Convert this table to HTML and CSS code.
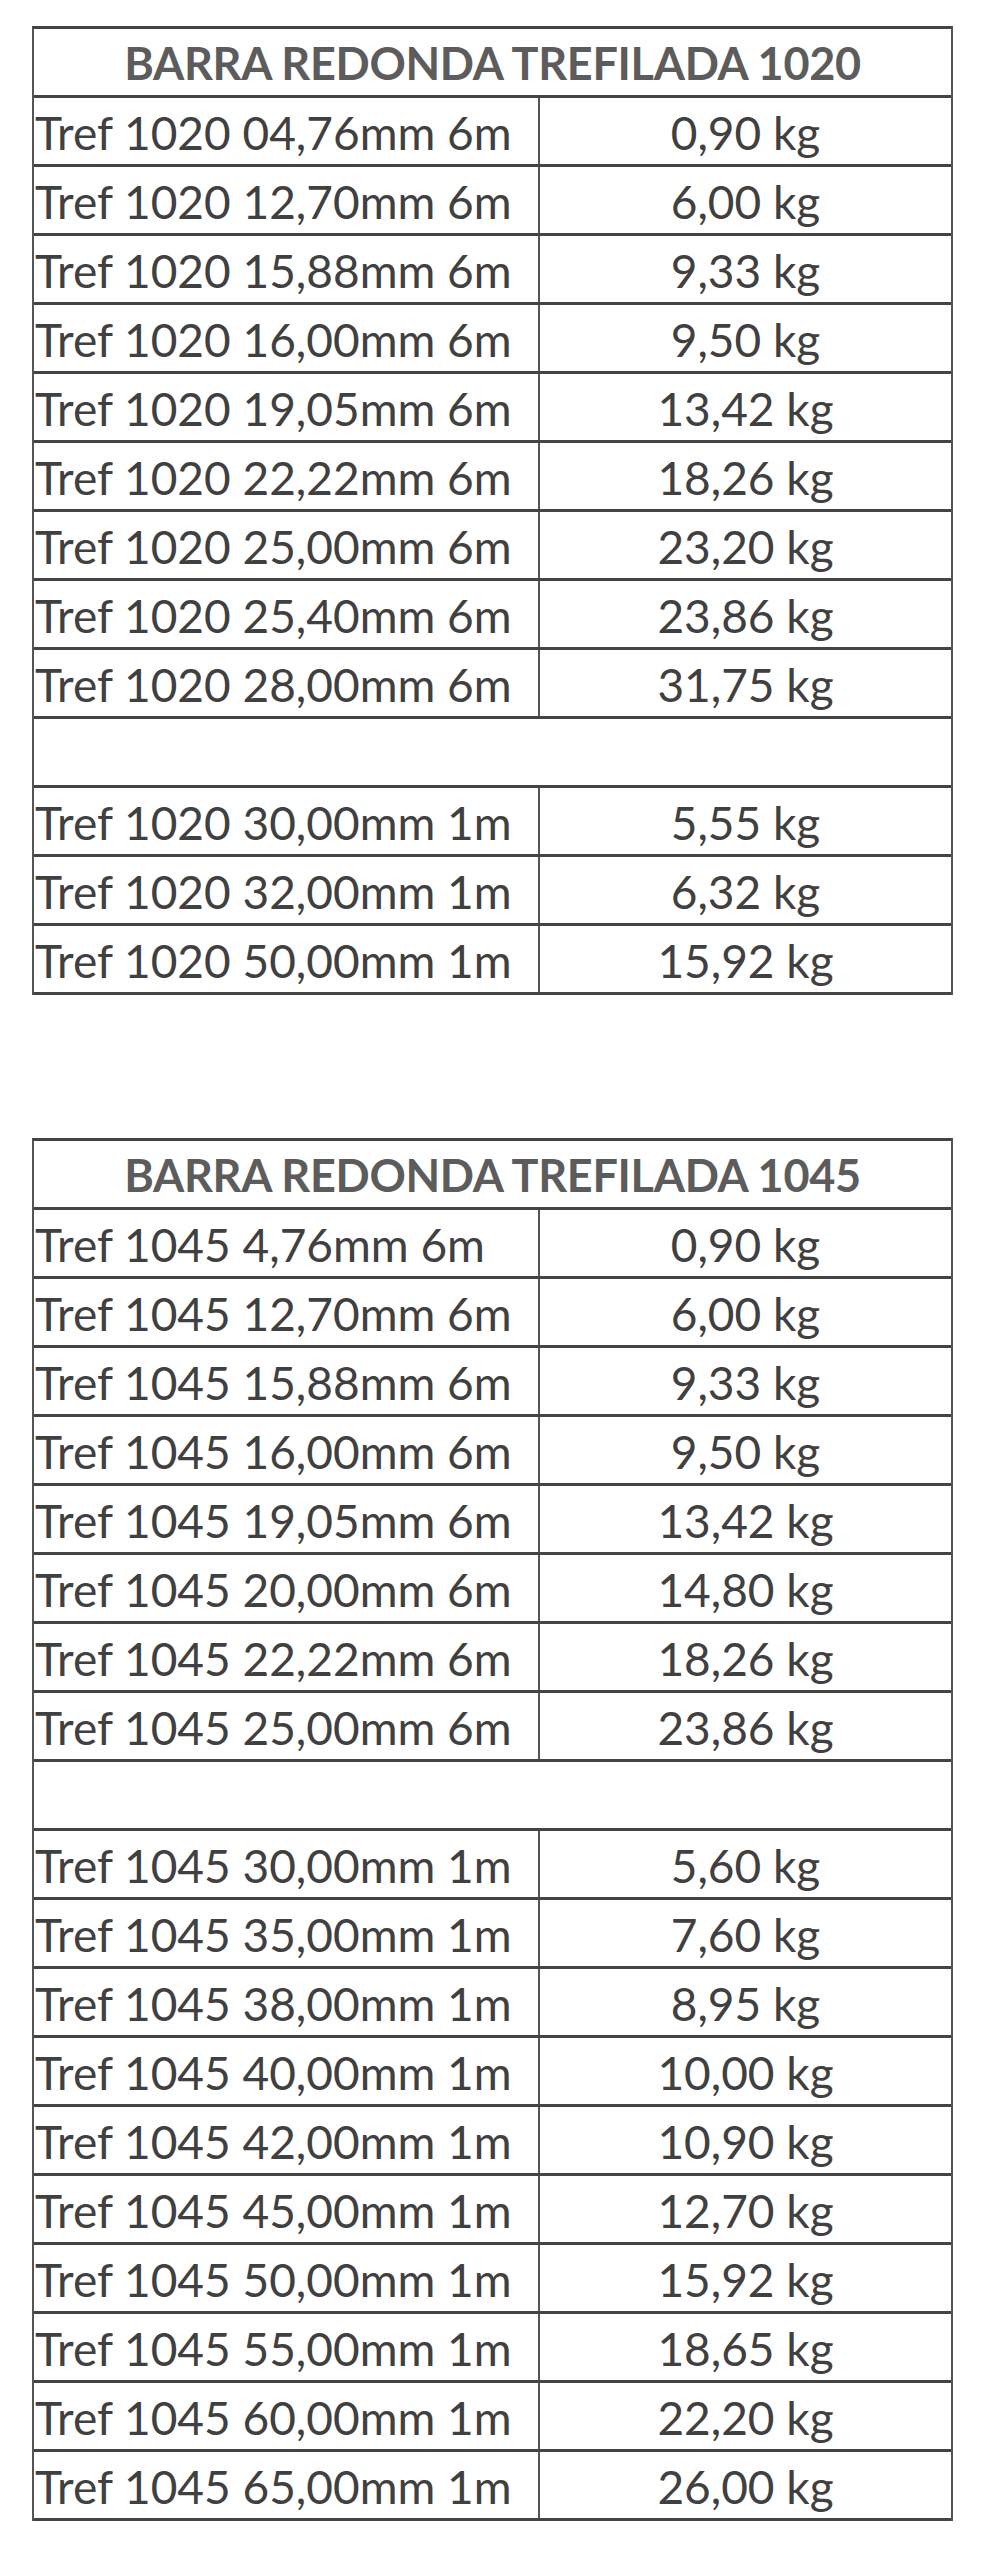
FILE: index.html
```html
<!DOCTYPE html>
<html lang="pt-BR">
<head>
<meta charset="utf-8">
<title>Barra Redonda Trefilada</title>
<link rel="stylesheet" href="styles.css">
</head>
<body>
<main class="page">
  <section class="sheet sheet-1020">
    <div class="head">BARRA REDONDA TREFILADA 1020</div>
    <div class="row"><div class="name">Tref 1020 04,76mm 6m</div><div class="kg">0,90 kg</div></div>
    <div class="row"><div class="name">Tref 1020 12,70mm 6m</div><div class="kg">6,00 kg</div></div>
    <div class="row"><div class="name">Tref 1020 15,88mm 6m</div><div class="kg">9,33 kg</div></div>
    <div class="row"><div class="name">Tref 1020 16,00mm 6m</div><div class="kg">9,50 kg</div></div>
    <div class="row"><div class="name">Tref 1020 19,05mm 6m</div><div class="kg">13,42 kg</div></div>
    <div class="row"><div class="name">Tref 1020 22,22mm 6m</div><div class="kg">18,26 kg</div></div>
    <div class="row"><div class="name">Tref 1020 25,00mm 6m</div><div class="kg">23,20 kg</div></div>
    <div class="row"><div class="name">Tref 1020 25,40mm 6m</div><div class="kg">23,86 kg</div></div>
    <div class="row"><div class="name">Tref 1020 28,00mm 6m</div><div class="kg">31,75 kg</div></div>
    <div class="row empty"></div>
    <div class="row"><div class="name">Tref 1020 30,00mm 1m</div><div class="kg">5,55 kg</div></div>
    <div class="row"><div class="name">Tref 1020 32,00mm 1m</div><div class="kg">6,32 kg</div></div>
    <div class="row"><div class="name">Tref 1020 50,00mm 1m</div><div class="kg">15,92 kg</div></div>
  </section>

  <section class="sheet sheet-1045">
    <div class="head">BARRA REDONDA TREFILADA 1045</div>
    <div class="row"><div class="name">Tref 1045 4,76mm 6m</div><div class="kg">0,90 kg</div></div>
    <div class="row"><div class="name">Tref 1045 12,70mm 6m</div><div class="kg">6,00 kg</div></div>
    <div class="row"><div class="name">Tref 1045 15,88mm 6m</div><div class="kg">9,33 kg</div></div>
    <div class="row"><div class="name">Tref 1045 16,00mm 6m</div><div class="kg">9,50 kg</div></div>
    <div class="row"><div class="name">Tref 1045 19,05mm 6m</div><div class="kg">13,42 kg</div></div>
    <div class="row"><div class="name">Tref 1045 20,00mm 6m</div><div class="kg">14,80 kg</div></div>
    <div class="row"><div class="name">Tref 1045 22,22mm 6m</div><div class="kg">18,26 kg</div></div>
    <div class="row"><div class="name">Tref 1045 25,00mm 6m</div><div class="kg">23,86 kg</div></div>
    <div class="row empty"></div>
    <div class="row"><div class="name">Tref 1045 30,00mm 1m</div><div class="kg">5,60 kg</div></div>
    <div class="row"><div class="name">Tref 1045 35,00mm 1m</div><div class="kg">7,60 kg</div></div>
    <div class="row"><div class="name">Tref 1045 38,00mm 1m</div><div class="kg">8,95 kg</div></div>
    <div class="row"><div class="name">Tref 1045 40,00mm 1m</div><div class="kg">10,00 kg</div></div>
    <div class="row"><div class="name">Tref 1045 42,00mm 1m</div><div class="kg">10,90 kg</div></div>
    <div class="row"><div class="name">Tref 1045 45,00mm 1m</div><div class="kg">12,70 kg</div></div>
    <div class="row"><div class="name">Tref 1045 50,00mm 1m</div><div class="kg">15,92 kg</div></div>
    <div class="row"><div class="name">Tref 1045 55,00mm 1m</div><div class="kg">18,65 kg</div></div>
    <div class="row"><div class="name">Tref 1045 60,00mm 1m</div><div class="kg">22,20 kg</div></div>
    <div class="row"><div class="name">Tref 1045 65,00mm 1m</div><div class="kg">26,00 kg</div></div>
  </section>
</main>
</body>
</html>
```

FILE: styles.css
```css
html, body {
  margin: 0;
  padding: 0;
  background: #ffffff;
}

.page {
  width: 985px;
  min-height: 2560px;
  box-sizing: border-box;
  padding: 26px 0 0 32px;
  display: flex;
  flex-direction: column;
  gap: 143px;
  font-family: Lato, "Open Sans", "Liberation Sans", sans-serif;
  color: #404040;
}

.sheet {
  width: 921px;
  box-sizing: border-box;
  border-left: 2px solid #555555;
  border-right: 2px solid #555555;
  border-top: 3px solid #444444;
}

.head {
  height: 69px;
  box-sizing: border-box;
  border-bottom: 3px solid #444444;
  display: flex;
  align-items: center;
  justify-content: center;
  font-weight: 700;
  font-size: 45px;
  color: #5c5c5c;
  letter-spacing: -0.3px;
  padding-top: 2px;
}

.row {
  height: 69px;
  box-sizing: border-box;
  border-bottom: 3px solid #444444;
  display: grid;
  grid-template-columns: 506px 1fr;
}

.row.empty {
  display: block;
}

.name,
.kg {
  display: flex;
  align-items: center;
  font-size: 46px;
  padding-top: 2px;
  white-space: nowrap;
}

.name {
  padding-left: 1px;
  border-right: 2px solid #555555;
}

.kg {
  justify-content: center;
}
```
